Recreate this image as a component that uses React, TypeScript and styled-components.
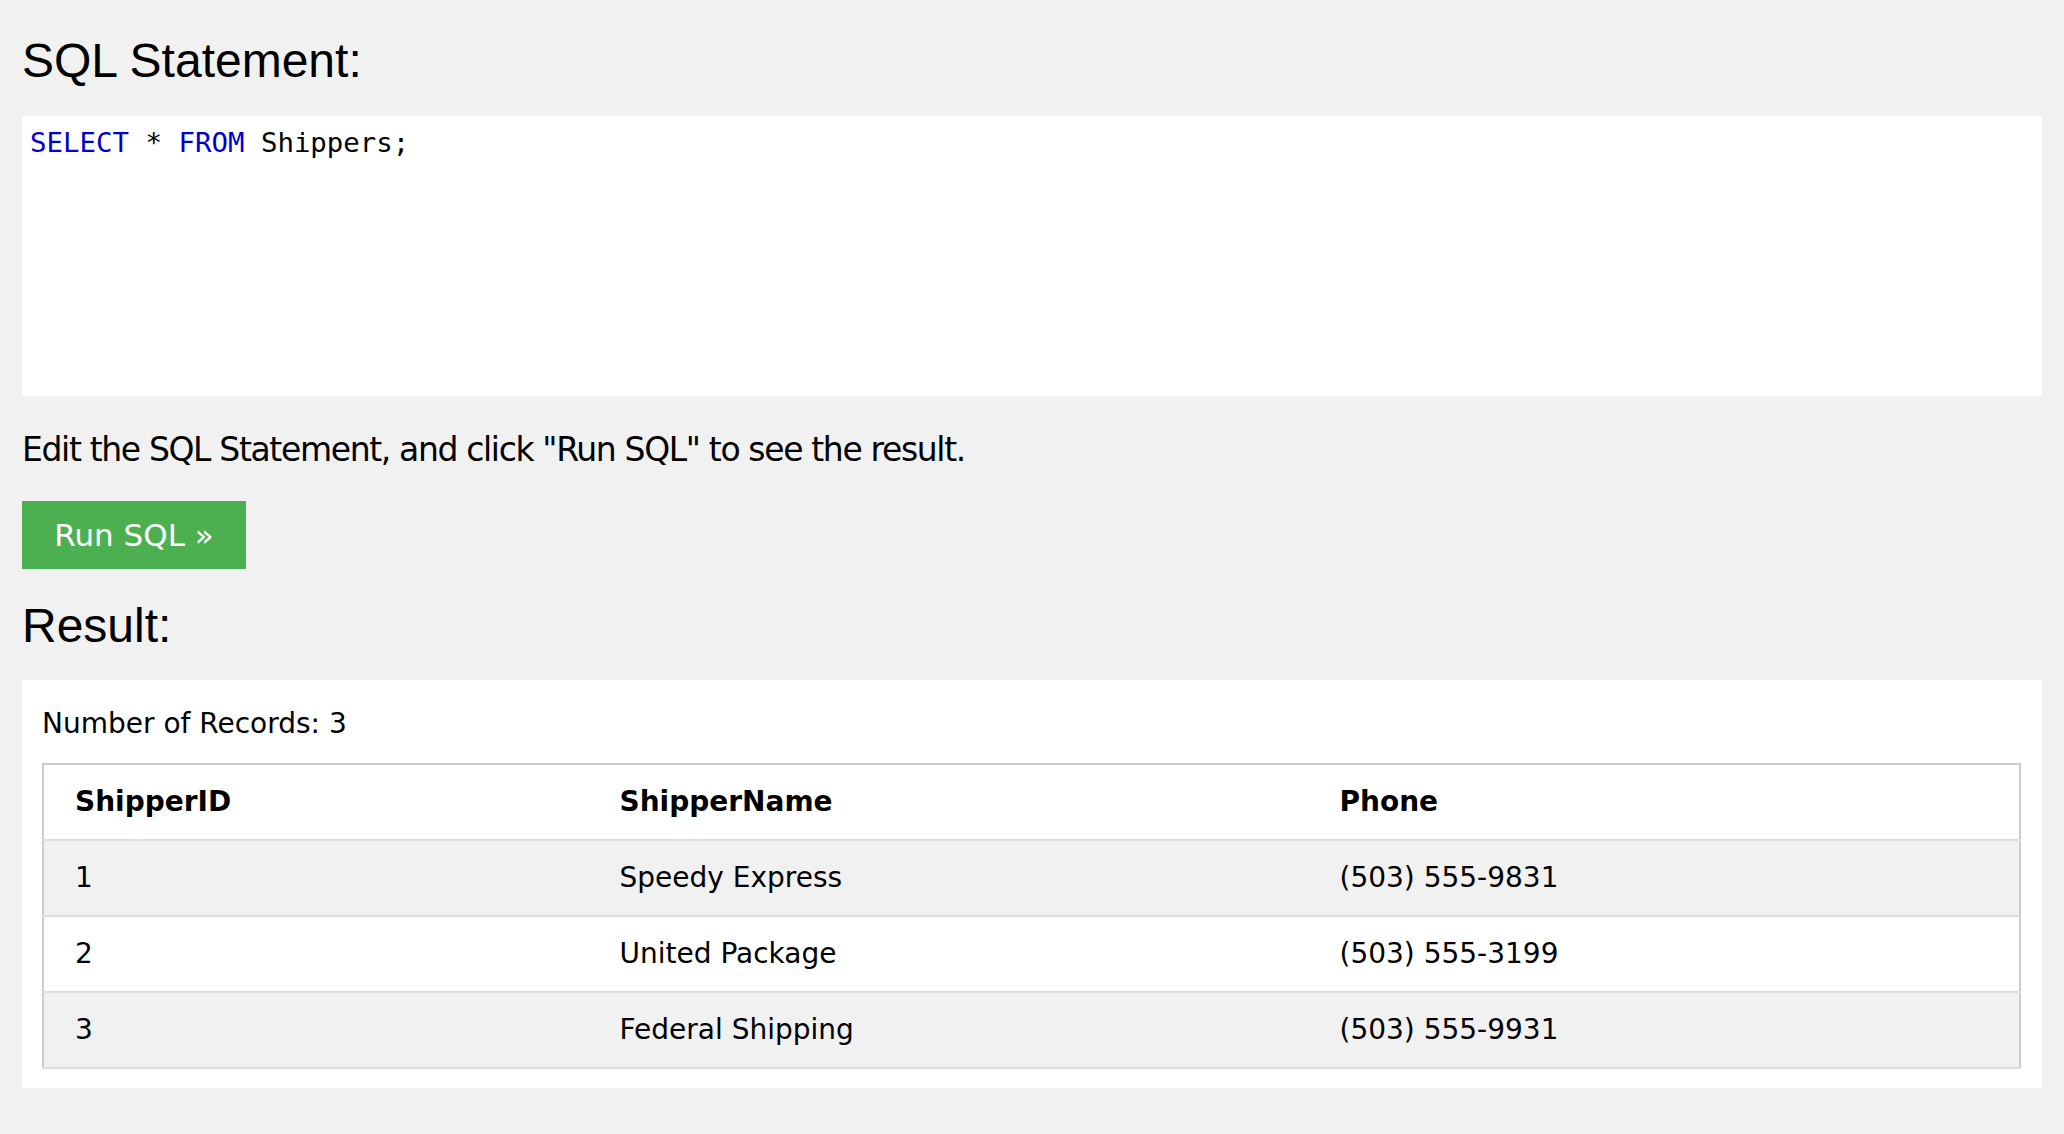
import React from "react";
import styled, { createGlobalStyle } from "styled-components";

const GlobalStyle = createGlobalStyle`
  html, body {
    margin: 0;
    padding: 0;
    background: #f1f1f1;
  }
  body {
    font-family: "DejaVu Sans", Verdana, sans-serif;
    color: #000;
  }
`;

const Page = styled.div`
  display: flex;
  flex-direction: column;
  align-items: flex-start;
  padding: 33px 22px 40px 22px;
`;

const Heading = styled.h2<{ $gapBelow: number }>`
  margin: 0 0 ${(p) => p.$gapBelow}px 0;
  font-family: "Liberation Sans", Arial, sans-serif;
  font-weight: normal;
  font-size: 48px;
  line-height: normal;
  letter-spacing: 0;
`;

const CodeBox = styled.div`
  align-self: stretch;
  box-sizing: border-box;
  height: 280px;
  background: #fff;
  padding: 11px 8px;
  font-family: "DejaVu Sans Mono", Menlo, monospace;
  font-size: 27.4px;
  line-height: normal;
  white-space: pre;
  color: #000;
`;

const Keyword = styled.span`
  color: #0000cd;
`;

const Hint = styled.p`
  margin: 34px 0 31.5px 0;
  font-size: 33px;
  letter-spacing: -1.35px;
  line-height: normal;
`;

const RunButton = styled.button`
  display: flex;
  align-items: center;
  justify-content: center;
  box-sizing: border-box;
  height: 68px;
  width: 224px;
  margin: 0 0 29px 0;
  padding: 0;
  border: none;
  background: #4caf50;
  color: #fff;
  font-family: "DejaVu Sans", Verdana, sans-serif;
  font-size: 31px;
  cursor: pointer;
`;

const ResultBox = styled.div`
  align-self: stretch;
  box-sizing: border-box;
  background: #fff;
  padding: 27px 21px 19px 20px;
  display: flex;
  flex-direction: column;
  gap: 23px;
`;

const RecordCount = styled.div`
  font-size: 28px;
  line-height: normal;
`;

const Table = styled.table`
  width: 100%;
  border-collapse: collapse;
  border: 2px solid #ccc;
  font-size: 28px;
  table-layout: fixed;
`;

const Row = styled.tr<{ $shaded: boolean }>`
  height: 76px;
  background: ${(p) => (p.$shaded ? "#f1f1f1" : "#fff")};
  border-bottom: 2px solid #ddd;
`;

const HeadCell = styled.th<{ $w: string }>`
  width: ${(p) => p.$w};
  text-align: left;
  font-weight: bold;
  padding: 0 0 0 31px;
  vertical-align: middle;
`;

const Cell = styled.td`
  padding: 0 0 0 31px;
  vertical-align: middle;
`;

const rows = [
  ["1", "Speedy Express", "(503) 555-9831"],
  ["2", "United Package", "(503) 555-3199"],
  ["3", "Federal Shipping", "(503) 555-9931"],
];

export default function App() {
  return (
    <>
      <GlobalStyle />
      <Page>
        <Heading $gapBelow={28}>SQL Statement:</Heading>
        <CodeBox>
          <Keyword>SELECT</Keyword> * <Keyword>FROM</Keyword> Shippers;
        </CodeBox>
        <Hint>Edit the SQL Statement, and click "Run SQL" to see the result.</Hint>
        <RunButton type="button">Run SQL »</RunButton>
        <Heading $gapBelow={27}>Result:</Heading>
        <ResultBox>
          <RecordCount>Number of Records: 3</RecordCount>
          <Table>
            <thead>
              <Row $shaded={false}>
                <HeadCell $w="27.3%">ShipperID</HeadCell>
                <HeadCell $w="36.6%">ShipperName</HeadCell>
                <HeadCell $w="36.1%">Phone</HeadCell>
              </Row>
            </thead>
            <tbody>
              {rows.map((r, i) => (
                <Row key={r[0]} $shaded={i % 2 === 0}>
                  {r.map((c) => (
                    <Cell key={c}>{c}</Cell>
                  ))}
                </Row>
              ))}
            </tbody>
          </Table>
        </ResultBox>
      </Page>
    </>
  );
}
